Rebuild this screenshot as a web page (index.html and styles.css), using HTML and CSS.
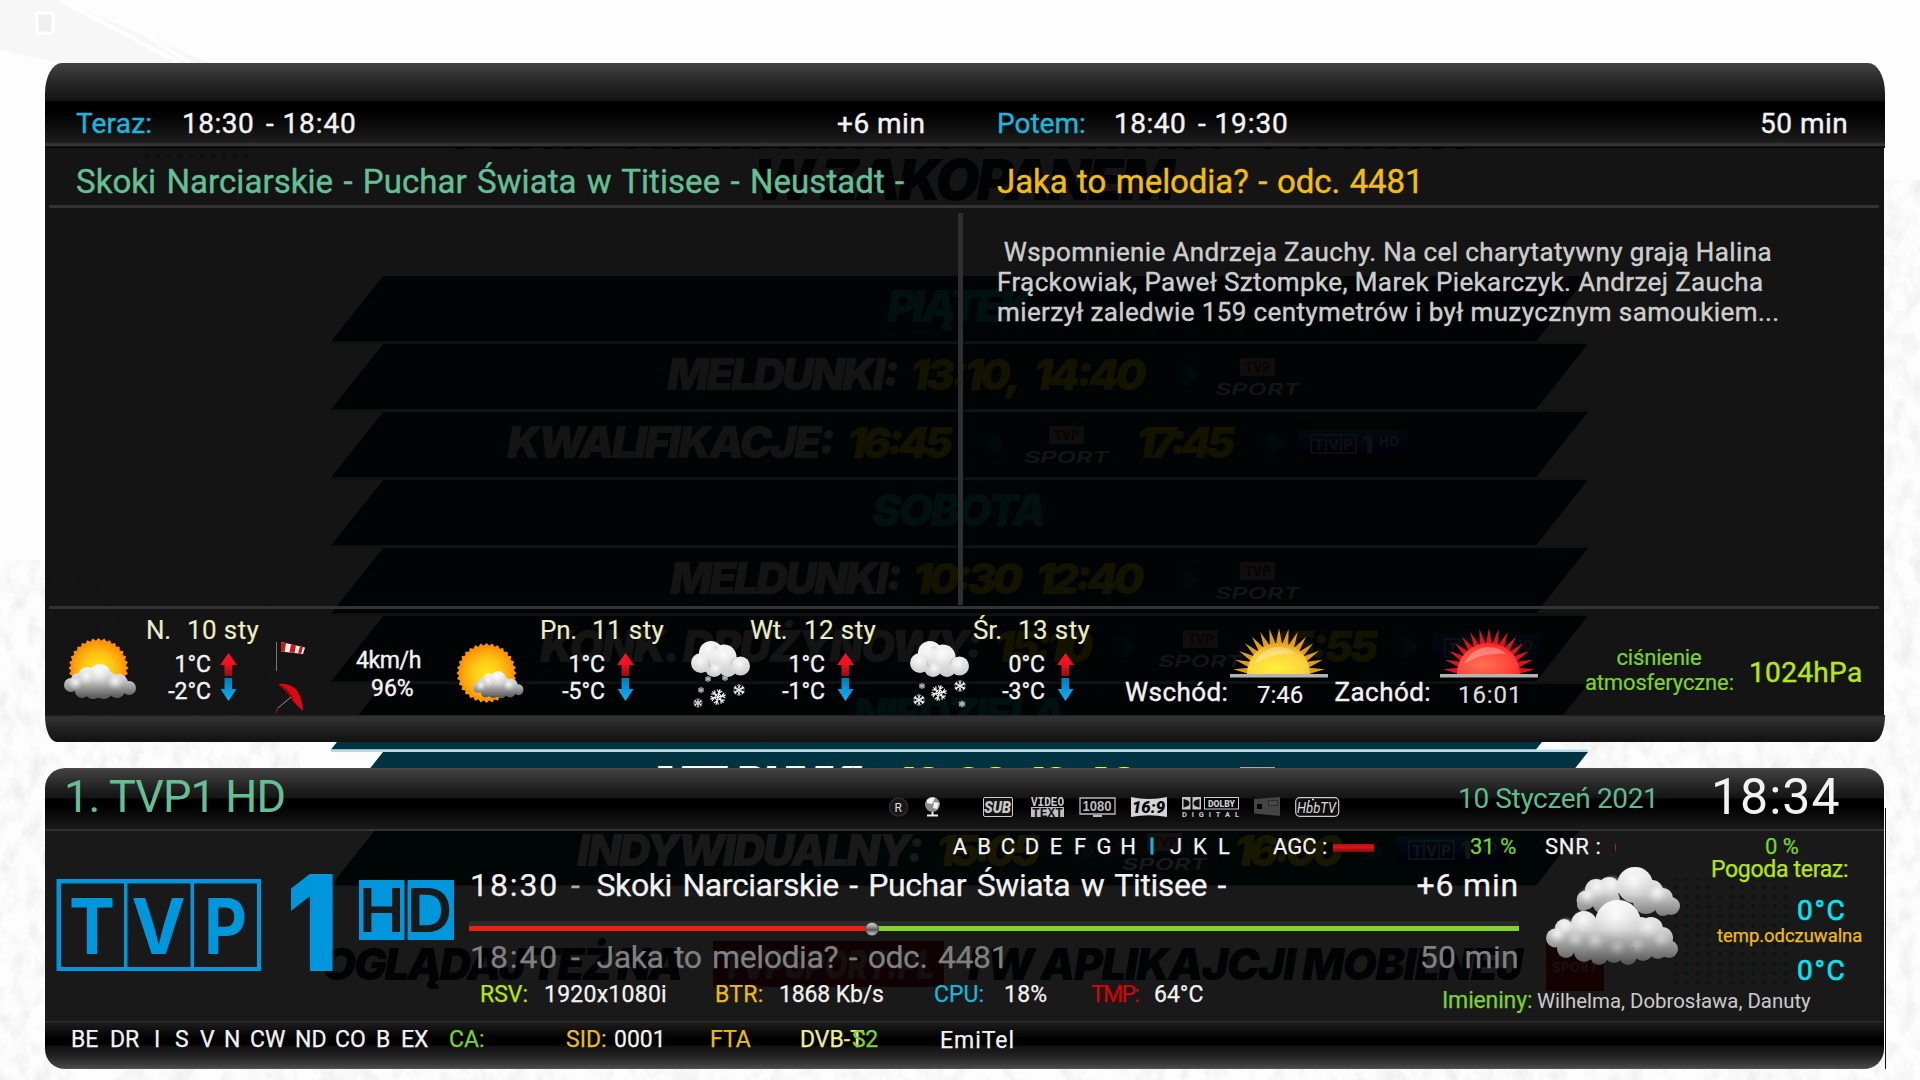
FILE: index.html
```html
<!DOCTYPE html>
<html lang="pl">
<head>
<meta charset="utf-8">
<title>TVP1 HD – infobar</title>
<link rel="stylesheet" href="styles.css">
</head>
<body>

<!-- live broadcast behind the overlay -->
<svg class="broadcast" width="1920" height="1080" viewBox="0 0 1920 1080" aria-hidden="true">
  <defs>
    <filter id="grain" x="0" y="0" width="100%" height="100%">
      <feTurbulence type="fractalNoise" baseFrequency="0.07 0.045" numOctaves="5" seed="7" result="n"/>
      <feColorMatrix in="n" values="0 0 0 0 .86  0 0 0 0 .86  0 0 0 0 .87  2.4 0 0 0 -1.02"/>
      <feComposite in2="SourceGraphic" operator="in"/>
    </filter>
    <linearGradient id="chan" x1="0" y1="0" x2="0" y2="1"><stop offset="0" stop-color="#1380b4"/><stop offset=".5" stop-color="#0a3cb4"/><stop offset="1" stop-color="#020850"/></linearGradient>
    <linearGradient id="arr"><stop offset="0" stop-color="#00b4a0" stop-opacity="0"/><stop offset="1" stop-color="#00b4a0" stop-opacity=".8"/></linearGradient>
    <pattern id="dots" width="11" height="9.5" patternUnits="userSpaceOnUse"><circle cx="4" cy="4" r="2.4" fill="#00a090" opacity=".45"/></pattern>
    <g id="band"><path d="M383 0H1588L1536 65.5H331Z" fill="#003341"/><path d="M331 65.5H1588V68H331Z" fill="#b4dce6"/></g>
    <g id="sport">
      <rect x="25" width="35" height="18" fill="#b9a0a0"/>
      <text x="30" y="14" textLength="25" lengthAdjust="spacingAndGlyphs" font-size="13" font-weight="700" font-family="Inter" fill="#a01e1e">TVP</text>
      <text x="0" y="36.500" textLength="85" lengthAdjust="spacingAndGlyphs" font-size="16" font-style="italic" font-weight="600" font-family="Inter" fill="#fff">SPORT</text>
    </g>
    <g id="chanlogo">
      <rect width="108" height="28" fill="url(#chan)"/>
      <path d="M12 5H57V23H12ZM27 5V23M42 5V23" fill="none" stroke="#ccd" stroke-width="1.500"/>
      <text x="15" y="20" textLength="39" lengthAdjust="spacing" font-size="15" font-weight="700" font-family="Inter" fill="#ccd">TVP</text>
      <text x="63" y="23" font-size="25" font-weight="900" font-family="Inter" fill="#ccd">1</text>
      <text x="80" y="16" textLength="20" font-size="13" font-weight="700" font-family="Inter" fill="#ccd">HD</text>
    </g>
    <path id="arrow" d="M0 0H14L23 10L14 20H0Z" fill="url(#arr)"/>
  </defs>
  <rect width="1920" height="1080" fill="#fdfdfd"/>
  <path d="M0 560H300V790H0ZM0 1040H1920V1080H0ZM1560 742H1920V790H1560ZM1880 180H1920V1080H1880ZM0 760H46V1080H0Z" filter="url(#grain)"/>
  <path d="M0 0H60L210 63H60L0 50Z" fill="#f8f7f8"/>
  <path d="M60 0L180 63M130 25L190 63" stroke="#fff" stroke-width="4"/>
  <rect x="37" y="13" width="16" height="20" rx="2" fill="#efeff0" stroke="#fff" stroke-width="3"/>
  <rect x="140" y="143" width="112" height="20" fill="url(#dots)"/>
  <rect x="1672" y="878" width="120" height="112" fill="url(#dots)"/>
  <g class="caption dark">
    <text x="455" y="149" textLength="1013">PLAN TRANSMISJI PUCHARU ŚWIATA</text>
    <text x="753" y="200" textLength="422" class="caption-lg">W ZAKOPANEM</text>
    <text x="322" y="980" textLength="361">OGLĄDAJ TEŻ NA</text>
    <text x="968" y="980" textLength="555">I W APLIKAJCJI MOBILNEJ</text>
  </g>
  <rect x="713" y="941" width="231" height="46" fill="#a00a14"/>
  <text class="caption pale" x="722" y="979" textLength="212" lengthAdjust="spacingAndGlyphs">TVPSPORT.PL</text>
  <rect x="1546" y="938" width="58" height="53" fill="#c80a14"/>
  <text x="1552" y="972" textLength="46" font-size="13" font-weight="700" font-family="Inter" fill="#eaa">SPORT</text>
  <g>
    <use href="#band" y="276"/><use href="#band" y="344"/><use href="#band" y="412"/><use href="#band" y="480"/><use href="#band" y="548"/>
    <use href="#band" y="616"/><use href="#band" y="684"/><use href="#band" y="752"/>
    <path d="M383 820H1588L1536 885.500H331Z" fill="#003341"/>
  </g>
  <g class="caption teal">
    <text x="887" y="322" textLength="146">PIĄTEK</text>
    <text x="872" y="526" textLength="175">SOBOTA</text>
    <text x="853" y="730" textLength="213">NIEDZIELA</text>
  </g>
  <g class="caption white">
    <text x="667" y="390" textLength="232">MELDUNKI:</text>
    <text x="507" y="458" textLength="328">KWALIFIKACJE:</text>
    <text x="670" y="594" textLength="232">MELDUNKI:</text>
    <text x="540" y="662" textLength="442">KONK. DRUŻYNOWY:</text>
    <text x="653" y="798" textLength="220">MELDUNKI:</text>
    <text x="577" y="866" textLength="346">INDYWIDUALNY:</text>
  </g>
  <g class="caption yellow">
    <text x="910" y="390" textLength="236">13:10, 14:40</text>
    <text x="847" y="458" textLength="106">16:45</text>
    <text x="1136" y="458" textLength="99">17:45</text>
    <text x="913" y="594" textLength="231">10:30 12:40</text>
    <text x="995" y="662" textLength="98">15:10</text>
    <text x="1270" y="662" textLength="108">15:55</text>
    <text x="893" y="798" textLength="243">10:30 12:40</text>
    <text x="936" y="866" textLength="104">15:05</text>
    <text x="1234" y="866" textLength="109">16:00</text>
  </g>
  <use href="#arrow" x="1175" y="365"/><use href="#sport" x="1215" y="358"/>
  <use href="#arrow" x="980" y="433"/><use href="#sport" x="1024" y="426"/><use href="#arrow" x="1260" y="433"/><use href="#chanlogo" x="1299" y="430"/>
  <use href="#arrow" x="1175" y="569"/><use href="#sport" x="1215" y="562"/>
  <use href="#arrow" x="1112" y="637"/><use href="#sport" x="1158" y="630"/><use href="#arrow" x="1395" y="637"/><use href="#chanlogo" x="1433" y="634"/>
  <use href="#sport" x="1215" y="767"/>
  <use href="#arrow" x="1072" y="841"/><use href="#sport" x="1122" y="833"/><use href="#arrow" x="1360" y="841"/><use href="#chanlogo" x="1397" y="836"/>
  <path d="M1885.500 808V1069" stroke="#111"/>
</svg>

<!-- shared weather artwork -->
<svg class="defs" width="0" height="0" aria-hidden="true">
  <defs>
    <radialGradient id="sunG" cx=".5" cy=".52" r=".5"><stop offset="0" stop-color="#ffe81a"/><stop offset=".6" stop-color="#ffc413"/><stop offset="1" stop-color="#ff9c08"/></radialGradient>
    <linearGradient id="cloudG" x1="0" y1="0" x2="0" y2="34" gradientUnits="userSpaceOnUse"><stop offset=".1" stop-color="#f6f6f6"/><stop offset=".5" stop-color="#c4c4c4"/><stop offset=".95" stop-color="#606060"/></linearGradient>
    <linearGradient id="snowG" x1="0" y1="0" x2="0" y2="37" gradientUnits="userSpaceOnUse"><stop offset=".3" stop-color="#f0f0f0"/><stop offset="1" stop-color="#cacaca"/></linearGradient>
    <radialGradient id="puff" cx=".45" cy=".38" r=".58"><stop offset="0" stop-color="#fff" stop-opacity=".85"/><stop offset=".55" stop-color="#f4f4f4" stop-opacity=".35"/><stop offset="1" stop-color="#ddd" stop-opacity="0"/></radialGradient>
    <linearGradient id="upG" x1="0" y1="0" x2="0" y2="1"><stop offset="0" stop-color="#ff1428"/><stop offset=".5" stop-color="#f01020"/><stop offset="1" stop-color="#960c10"/></linearGradient>
    <linearGradient id="downG" x1="0" y1="0" x2="0" y2="1"><stop offset="0" stop-color="#0878b4"/><stop offset=".6" stop-color="#0a9ce0"/><stop offset="1" stop-color="#10b4f4"/></linearGradient>
    <g id="sun">
      <g fill="#ff9408">
        <path id="sq" d="M0-30L30 0L0 30L-30 0Z"/>
        <use href="#sq" transform="rotate(11.250)"/><use href="#sq" transform="rotate(22.500)"/><use href="#sq" transform="rotate(33.750)"/>
        <use href="#sq" transform="rotate(45)"/><use href="#sq" transform="rotate(56.250)"/><use href="#sq" transform="rotate(67.500)"/><use href="#sq" transform="rotate(78.750)"/>
      </g>
      <circle r="25.500" fill="url(#sunG)"/>
    </g>
    <g id="cloud">
      <g fill="url(#cloudG)"><circle cx="7" cy="21" r="7"/><circle cx="14" cy="16" r="7"/><circle cx="23" cy="12" r="9"/><circle cx="36" cy="11" r="11"/><circle cx="45" cy="16" r="8"/><circle cx="55" cy="19" r="9"/><circle cx="65" cy="24" r="7"/><circle cx="18" cy="27" r="7"/><circle cx="29" cy="27" r="8"/><circle cx="40" cy="26" r="9"/><circle cx="53" cy="26" r="8"/></g>
      <g fill="url(#puff)"><circle cx="36" cy="11" r="11"/><circle cx="23" cy="14" r="8"/><circle cx="12" cy="20" r="7"/><circle cx="52" cy="19" r="8"/></g>
    </g>
    <g id="snowcloud">
      <g fill="url(#snowG)"><circle cx="20" cy="12" r="12"/><circle cx="33" cy="16" r="12.500"/><circle cx="10" cy="22" r="10"/><circle cx="49.500" cy="25" r="9.500"/><circle cx="23" cy="27" r="9"/><circle cx="37" cy="27" r="9"/></g>
      <g fill="none" stroke="#8a8a8a" stroke-width="1.500" opacity=".3"><path d="M18 10Q20 6 26 6M20 12Q22 8 27 7M20 26Q16 24 18 20M40 24Q40 20 44 17"/></g>
      <g fill="url(#puff)"><circle cx="20" cy="11" r="10"/><circle cx="33" cy="16" r="12"/><circle cx="10" cy="22" r="9"/><circle cx="49" cy="25" r="9"/><circle cx="25" cy="29" r="7"/></g>
    </g>
    <g id="flake" fill="none" stroke="#f4f4f4" stroke-width="1.200"><path id="fl" d="M0-8V8M-2.500-7L0-4L2.500-7M-2.500 7L0 4L2.500 7"/><use href="#fl" transform="rotate(60)"/><use href="#fl" transform="rotate(120)"/><circle r="3"/></g>
    <g id="temps"><path d="M8.500 0L17 12H12V23H4.500V12H0Z" fill="url(#upG)"/><path d="M4.500 25H12V36H16.500L8.500 48L.5 36H4.500Z" fill="url(#downG)"/></g>
    <path id="ray" d="M-3.500-28L0-46L3.500-28Z"/>
    <g id="rays"><use href="#ray"/><use href="#ray" transform="rotate(12)"/><use href="#ray" transform="rotate(24)"/><use href="#ray" transform="rotate(36)"/><use href="#ray" transform="rotate(48)"/><use href="#ray" transform="rotate(60)"/><use href="#ray" transform="rotate(72)"/><use href="#ray" transform="rotate(84)"/><use href="#ray" transform="rotate(-12)"/><use href="#ray" transform="rotate(-24)"/><use href="#ray" transform="rotate(-36)"/><use href="#ray" transform="rotate(-48)"/><use href="#ray" transform="rotate(-60)"/><use href="#ray" transform="rotate(-72)"/><use href="#ray" transform="rotate(-84)"/></g>
    <radialGradient id="riseG" cx=".45" cy=".8" r=".8"><stop offset="0" stop-color="#fff03c"/><stop offset=".6" stop-color="#fbd23c"/><stop offset="1" stop-color="#e8a020"/></radialGradient>
    <radialGradient id="setG" cx=".4" cy=".7" r=".8"><stop offset="0" stop-color="#ff7058"/><stop offset=".6" stop-color="#ff4438"/><stop offset="1" stop-color="#f01824"/></radialGradient>
  </defs>
</svg>

<main class="osd">
  <section class="panel epg">
    <header class="epg-times">
      <span class="blue t0">Teraz:</span><span class="t1">18:30</span><span class="t2">- 18:40</span><span class="t3">+6 min</span>
      <span class="blue">Potem:</span><span class="t1">18:40</span><span class="t2">- 19:30</span><span class="t3">50 min</span>
    </header>
    <div class="epg-titles">
      <span class="mint">Skoki Narciarskie - Puchar Świata w Titisee - Neustadt -</span>
      <span class="amber">Jaka to melodia? - odc. 4481</span>
    </div>
    <div class="rule"></div>
    <div class="epg-body">
      <div></div>
      <div class="divider"></div>
      <p class="desc">&nbsp;Wspomnienie Andrzeja Zauchy. Na cel charytatywny grają Halina<br>Frąckowiak, Paweł Sztompke, Marek Piekarczyk. Andrzej Zaucha<br>mierzył zaledwie 159 centymetrów i był muzycznym samoukiem...</p>
    </div>
    <div class="rule"></div>
    <div class="forecast">
      <svg class="wx" width="81" height="106" viewBox="64 609 81 106">
        <use href="#sun" transform="translate(98.500 668)"/>
        <use href="#cloud" transform="translate(64 664)"/>
      </svg>
      <div class="day day-1">
        <div class="date"><span>N.</span><span>10 sty</span></div>
        <div class="temps"><div>1°C<br>-2°C</div><svg width="17" height="48"><use href="#temps"/></svg></div>
      </div>
      <svg width="80" height="106" viewBox="276 609 80 106">
        <path d="M276.500 642V671" stroke="#777"/>
        <path d="M281 642L305 647.500L303 654L281 651.500Z" fill="#f2f2f2"/>
        <path d="M281 642L286 643L284.500 652L281 651.500ZM291 644.300L296 645.500L294.500 653L289.500 652.500ZM300 646.300L303 647L301 653.800L298 653.500Z" fill="#d4161c"/>
        <path d="M278 684Q301 681 303 711Q294 703 291 698Q286 690 278 684Z" fill="#e00810"/>
        <path d="M278 684Q284 687 291 698L294 701Q290 688 278 684Z" fill="#980408"/>
        <path d="M291 697L278 708" stroke="#999"/><path d="M278 708Q275 711 277 713" stroke="#a01010" fill="none" stroke-width="1.500"/>
      </svg>
      <div class="air"><div>4km/h</div><div class="hum">96%</div></div>
      <svg class="wx" width="83" height="106" viewBox="456 609 83 106">
        <use href="#sun" transform="translate(486.500 673)"/>
        <use href="#cloud" transform="translate(473 671) scale(.7 .78)"/>
      </svg>
      <div class="day day-2">
        <div class="date"><span>Pn.</span><span>11 sty</span></div>
        <div class="temps"><div>1°C<br>-5°C</div><svg width="17" height="48"><use href="#temps"/></svg></div>
      </div>
      <svg width="59" height="106" viewBox="691 609 59 106">
        <use href="#flake" transform="translate(708 679) scale(.4)"/><use href="#flake" transform="translate(725 678) scale(.4)"/>
        <use href="#snowcloud" transform="translate(691 641)"/>
        <use href="#flake" transform="translate(718 697) rotate(15)"/><use href="#flake" transform="translate(739 690) scale(.75)"/><use href="#flake" transform="translate(701 690) scale(.4)"/><use href="#flake" transform="translate(698 703) scale(.6)"/>
      </svg>
      <div class="day day-3">
        <div class="date"><span>Wt.</span><span>12 sty</span></div>
        <div class="temps"><div>1°C<br>-1°C</div><svg width="17" height="48"><use href="#temps"/></svg></div>
      </div>
      <svg width="63" height="106" viewBox="910 609 63 106">
        <use href="#snowcloud" transform="translate(910 641)"/>
        <use href="#flake" transform="translate(939 693) rotate(15)"/><use href="#flake" transform="translate(960 686) scale(.75)"/><use href="#flake" transform="translate(922 686) scale(.4)"/><use href="#flake" transform="translate(919 700) scale(.75)"/><use href="#flake" transform="translate(962 704) scale(.45)"/>
      </svg>
      <div class="day day-4">
        <div class="date"><span>Śr.</span><span>13 sty</span></div>
        <div class="temps"><div>0°C<br>-3°C</div><svg width="17" height="48"><use href="#temps"/></svg></div>
      </div>
      <div class="sun-label">Wschód:</div>
      <div class="sun-time">
        <svg width="98" height="50" viewBox="0 0 98 50"><g transform="translate(49 46)" fill="#e09c1e"><use href="#rays"/></g><path d="M17 46A31.500 31 0 0 1 80 46Z" fill="url(#riseG)"/><path d="M24 36Q32 20 48 19Q62 20 66 26Q42 24 24 36Z" fill="#fff" opacity=".3"/><path d="M0 46H98V49.500H0Z" fill="#b4b4b4"/></svg>
        <span>7:46</span>
      </div>
      <div class="sun-label sun-set">Zachód:</div>
      <div class="sun-time late">
        <svg width="98" height="50" viewBox="0 0 98 50"><g transform="translate(49 46)" fill="#d81420"><use href="#rays"/></g><path d="M17 46A31.500 31 0 0 1 80 46Z" fill="url(#setG)"/><path d="M24 36Q32 20 48 19Q62 20 66 26Q42 24 24 36Z" fill="#fff" opacity=".3"/><path d="M0 46H98V49.500H0Z" fill="#b4b4b4"/></svg>
        <span>16:01</span>
      </div>
      <div class="press-label">ciśnienie<br>atmosferyczne:</div>
      <div class="press">1024hPa</div>
    </div>
    <div class="epg-foot"></div>
  </section>

  <section class="panel info">
    <header class="info-head">
      <span class="chan-name">1. TVP1 HD</span>
      <svg class="flags" width="460" height="20" viewBox="885 797 460 20">
        <circle cx="898.500" cy="807" r="9" fill="#161616" stroke="#2c2c2c" stroke-width="1.500"/>
        <text x="894.500" y="811.500" font-size="12" fill="#ddd">R</text>
        <circle cx="932.500" cy="804.500" r="7.500" fill="#8c8c8c"/><path d="M927 800Q931 796 935 798L932 804L927 803ZM934 802L939 803L937 809L933 808Z" fill="#f4f4f4"/><path d="M932.500 812V815M927 815.500H938" stroke="#eee" stroke-width="2"/>
        <rect x="983.500" y="797.500" width="29" height="19" rx="1.500" fill="#111" stroke="#ccc"/>
        <text x="984" y="813" textLength="27" lengthAdjust="spacingAndGlyphs" font-size="17" font-weight="900" font-style="italic" fill="#c8c8c8">SUB</text>
        <text x="1031" y="805.500" textLength="33" lengthAdjust="spacingAndGlyphs" font-size="12" font-weight="700" font-family="Liberation Mono" fill="#ccc">VIDEO</text>
        <rect x="1031" y="807" width="33" height="10" fill="#c0c0c0"/>
        <text x="1032" y="816.500" textLength="31" lengthAdjust="spacingAndGlyphs" font-size="13" font-weight="700" font-family="Liberation Mono" fill="#111">TEXT</text>
        <path d="M1080 798H1115V814H1080Z" fill="none" stroke="#bbb" stroke-width="1.300"/><rect x="1093" y="815" width="9" height="2" fill="#bbb"/>
        <text x="1082.500" y="811" textLength="29" lengthAdjust="spacingAndGlyphs" font-size="14" font-family="Liberation Sans" font-weight="700" fill="#bbb">1080</text>
        <path d="M1131 797Q1149 801 1167 797V817Q1149 813.500 1131 817Z" fill="#d4d4d4"/>
        <text x="1132" y="812.500" textLength="33" lengthAdjust="spacingAndGlyphs" font-size="16" font-weight="900" font-style="italic" fill="#000">16:9</text>
        <path d="M1182 797H1190.500V809.500H1182ZM1192.500 797H1201V809.500H1192.500Z" fill="#c4c4c4"/><path d="M1183.500 799Q1189.500 800 1189.500 803.300T1183.500 807.500ZM1199.500 799Q1193.500 800 1193.500 803.300T1199.500 807.500Z" fill="#111"/>
        <rect x="1204.500" y="797.500" width="34" height="11.500" fill="none" stroke="#ccc"/>
        <text x="1208" y="807" textLength="27" lengthAdjust="spacingAndGlyphs" font-size="9.500" font-weight="900" fill="#ccc">DOLBY</text>
        <text x="1182" y="817" textLength="57" font-size="7.500" font-weight="700" fill="#ccc">DIGITAL</text>
        <path d="M1254 799L1280 797V816L1254 813.500Z" fill="#444"/><rect x="1257" y="804" width="5" height="5" fill="#000"/><rect x="1268.500" y="800.500" width="9" height="5" fill="#4a4a4a" stroke="#2a2a2a"/>
        <rect x="1295.700" y="797.700" width="43" height="18.600" rx="4" fill="#0c0c0c" stroke="#ccc" stroke-width="1.200"/>
        <text x="1297" y="813" textLength="39" lengthAdjust="spacingAndGlyphs" font-size="14" font-style="italic" fill="#ddd">HbbTV</text>
        <path d="M1308 801H1310M1312 799.500H1314" stroke="#ddd" stroke-width="1.500"/>
      </svg>
      <span class="today">10 Styczeń 2021</span>
      <span class="clock">18:34</span>
    </header>

    <div class="signal">
      <div class="drives"><i>A</i><i>B</i><i>C</i><i>D</i><i>E</i><i>F</i><i>G</i><i>H</i><i class="on">I</i><i>J</i><i>K</i><i>L</i></div>
      <span>AGC :</span>
      <div class="meter"><b style="width:41px"></b></div>
      <span class="green">31 %</span>
      <span class="snr">SNR :</span>
      <div class="meter"><b style="width:1px"></b></div>
      <span class="green">0 %</span>
    </div>

    <div class="now">
      <svg class="logo" width="424" height="123" viewBox="45 862 424 123" fill="#0096dc" font-family="Inter">
        <path d="M56.500 879H261V971H56.500ZM61 883.500V967H124V883.500ZM127.500 883.500V967H190.500V883.500ZM194 883.500V967H257V883.500Z" fill-rule="evenodd"/>
        <text class="tvp" transform="translate(69 953.500) scale(1 1.080)" textLength="46" lengthAdjust="spacingAndGlyphs">T</text>
        <text class="tvp" transform="translate(131.500 953.500) scale(1 1.080)" textLength="54" lengthAdjust="spacingAndGlyphs">V</text>
        <text class="tvp" transform="translate(204 953.500) scale(1 1.080)" textLength="43" lengthAdjust="spacingAndGlyphs">P</text>
        <text x="286" y="971" font-size="133" font-weight="900" textLength="52" lengthAdjust="spacingAndGlyphs">1</text>
        <path d="M359 880H404.500V940H359ZM407.500 880H454V940H407.500Z"/>
        <g fill="#191919" font-size="60" font-weight="600">
          <text x="359" y="932" textLength="45.500" lengthAdjust="spacingAndGlyphs">H</text>
          <text x="406.500" y="932" textLength="46" lengthAdjust="spacingAndGlyphs">D</text>
        </g>
      </svg>
      <div class="events">
        <div class="event"><span class="ev-t">18:30</span><span class="dash">-</span><span class="ev-n">Skoki Narciarskie - Puchar Świata w Titisee -</span><span class="ev-d">+6 min</span></div>
        <div class="progress"><div class="track"><b style="width:397px"></b><i class="knob"></i></div></div>
        <div class="event next"><span class="ev-t">18:40</span><span class="dash">-</span><span class="ev-n">Jaka to melodia? - odc. 4481</span><span class="ev-e">50 min</span></div>
      </div>
      <svg class="big-wx" width="134" height="98" viewBox="0 0 134 98">
        <defs>
          <linearGradient id="backG" x1="0" y1="0" x2="0" y2="52" gradientUnits="userSpaceOnUse"><stop offset="0" stop-color="#f6f6f6"/><stop offset=".5" stop-color="#d0d0d0"/><stop offset="1" stop-color="#707070"/></linearGradient>
          <linearGradient id="frontG" x1="0" y1="33" x2="0" y2="98" gradientUnits="userSpaceOnUse"><stop offset="0" stop-color="#fff"/><stop offset=".45" stop-color="#d4d4d4"/><stop offset="1" stop-color="#505050"/></linearGradient>
          <filter id="soft"><feGaussianBlur stdDeviation="1.200"/></filter>
        </defs>
        <g fill="url(#backG)"><circle cx="40" cy="33" r="9.500"/><circle cx="37" cy="38" r="6"/><circle cx="50" cy="23" r="11"/><circle cx="63" cy="21" r="11"/><circle cx="89" cy="18" r="18"/><circle cx="106" cy="24" r="11"/><circle cx="117" cy="31" r="10"/><circle cx="125" cy="39" r="9"/><circle cx="60" cy="34" r="14"/><circle cx="100" cy="34" r="13"/><circle cx="117" cy="41" r="8"/></g>
        <g fill="url(#puff)" filter="url(#soft)"><circle cx="42" cy="30" r="9"/><circle cx="52" cy="22" r="10"/><circle cx="66" cy="20" r="11"/><circle cx="89" cy="17" r="17"/><circle cx="112" cy="28" r="10"/></g>
        <g fill="url(#frontG)"><circle cx="9.500" cy="71" r="9.500"/><circle cx="18" cy="61" r="9"/><circle cx="20" cy="82" r="9"/><circle cx="38" cy="85" r="10"/><circle cx="53" cy="89" r="9"/><circle cx="68" cy="86" r="10"/><circle cx="82" cy="89" r="9"/><circle cx="97" cy="84" r="10"/><circle cx="112" cy="82" r="10"/><circle cx="123" cy="82" r="9"/><circle cx="38" cy="57" r="13"/><circle cx="105" cy="62" r="12"/><circle cx="116" cy="71" r="11"/><circle cx="30" cy="70" r="14"/><circle cx="50" cy="70" r="16"/><circle cx="94" cy="66" r="16"/><circle cx="72" cy="56" r="23"/><circle cx="72" cy="76" r="16"/></g>
        <g fill="url(#puff)" filter="url(#soft)"><circle cx="12" cy="69" r="9"/><circle cx="20" cy="60" r="9"/><circle cx="38" cy="56" r="12"/><circle cx="72" cy="53" r="21"/><circle cx="30" cy="74" r="8" opacity=".5"/><circle cx="50" cy="76" r="9" opacity=".5"/><circle cx="103" cy="62" r="11" opacity=".7"/><circle cx="116" cy="74" r="9" opacity=".5"/><circle cx="92" cy="80" r="8" opacity=".4"/><circle cx="72" cy="82" r="8" opacity=".4"/></g>
      </svg>
      <div class="wx-now">
        <div class="wx-title">Pogoda teraz:</div>
        <div class="deg">0°C</div>
        <div class="feels">temp.odczuwalna</div>
        <div class="deg deg-2">0°C</div>
      </div>
    </div>

    <div class="stats">
      <span class="lime">RSV:</span><span class="w1">1920x1080i</span>
      <span class="gold w1">BTR:</span><span class="w3">1868 Kb/s</span>
      <span class="blue">CPU:</span><span class="w1">18%</span>
      <span class="red">TMP:</span><span>64°C</span>
      <span class="green names">Imieniny:</span><span class="names who">Wilhelma, Dobrosława, Danuty</span>
    </div>

    <footer class="caids">
      <span>BE</span><span>DR</span><span>I</span><span>S</span><span>V</span><span>N</span><span>CW</span><span>ND</span><span>CO</span><span>B</span><span>EX</span>
      <span class="green">CA:</span><span class="gold">SID:</span><span>0001</span><span class="gold">FTA</span>
      <span class="tuner">DVB-T<em>S2</em></span><span class="provider">EmiTel</span>
    </footer>
  </section>
</main>
</body>
</html>
```
FILE: styles.css
```css
* { box-sizing: border-box; }
body { margin: 0; width: 1920px; height: 1080px; overflow: hidden; background: #fdfdfd; font-family: Roboto, "Liberation Sans", sans-serif; font-weight: 400; color: #f2f2f2; position: relative; }
svg { display: block; }
i, em { font-style: normal; }

.broadcast { position: absolute; inset: 0; }
.defs { position: absolute; }
.caption { font-family: Inter, sans-serif; font-weight: 900; font-style: italic; font-size: 44px; }
.caption-lg { font-size: 57px; }
.dark { fill: #00202a; }
.teal { fill: #00d2c0; }
.white { fill: #fff; }
.pale { fill: #c8a0a0; font-size: 40px; }
.yellow { fill: #eef200; font-size: 43px; word-spacing: 12px; }

.osd { position: relative; display: flex; flex-direction: column; gap: 26px; padding: 63px 35px 0 45px; }
.panel { width: 1840px; overflow: hidden; white-space: nowrap; }
.epg { border-radius: 17px 17px 12px 12px / 30px 30px 26px 26px; -webkit-text-stroke: .4px; }

.blue { color: #1bb6dc; }
.mint { color: #66bf94; letter-spacing: .06px; word-spacing: 2px; }
.amber { color: #f0bd10; letter-spacing: -.08px; word-spacing: 1.5px; }
.green { color: #7cd22f; }
.lime { color: #b6e614; }
.gold { color: #eabb1c; }
.red { color: #d00505; letter-spacing: -1.7px; }

/* now / next */
.epg-times { height: 85px; padding: 38px 0 0 31px; display: grid; grid-template-columns: 106px 84px 571px 160px 117px 84px 562px 1fr; font-size: 28px; line-height: 46px;
  background: linear-gradient(#424242 0, #2a2a2a 17px, #141414 37px, #0a0a0a 38px, #000 39px, #000 50px, #1c1c1c 79px, #363636 81px, #303030 83px, #000 84px); }
.t0 { letter-spacing: .2px; }
.t1 { letter-spacing: .5px; }
.t2 { letter-spacing: .9px; }
.t3 { letter-spacing: .5px; }
.epg-titles { height: 57px; padding: 10px 0 0 31px; display: grid; grid-template-columns: 921px 1fr; font-size: 33px; line-height: 47px; background: rgba(0, 0, 0, .922); margin-right: 1px; }
.rule { height: 3px; background: #333; margin-right: 1px; border: solid #141414; border-width: 0 5px 0 4px; }
.epg-body { height: 398px; display: grid; grid-template-columns: 913px 5px 1fr; background: rgba(0, 0, 0, .922); margin-right: 1px; }
.divider { margin: 5px 0 1px; background: #2e2e2e; }
.desc { margin: 0; padding: 29px 0 0 34px; font-size: 26px; line-height: 30px; letter-spacing: .38px; color: #cdcdcd; }

.forecast { height: 106px; padding-left: 19px; margin-right: 1px; background: rgba(0, 0, 0, .922); display: grid;
  grid-template-columns: 81px 131px 80px 100px 83px 152px 59px 160px 63px 152px 105px 98px 112px 98px 47px 148px 1fr; }
.day { padding-top: 6px; }
.date { display: flex; font-size: 26px; line-height: 30px; color: #ecedc2; letter-spacing: .4px; -webkit-text-stroke: .15px; }
.date span:first-child { flex: none; letter-spacing: -.2px; }
.temps { display: flex; padding-top: 7px; font-size: 23px; line-height: 26.5px; text-align: right; }
.temps div { flex: none; }
.temps svg { margin-top: 1px; }
.day-1 .date { padding-left: 1px; }
.day-1 .date span:first-child { width: 41px; }
.day-1 .temps div { width: 66px; margin-right: 9px; }
.day-2 .date { padding-left: 1px; }
.day-2 .date span:first-child { width: 52px; }
.day-2 .temps div { width: 66px; margin-right: 12px; }
.day-3 .date { letter-spacing: .4px; }
.day-3 .date span:first-child { width: 54px; letter-spacing: -.4px; }
.day-3 .temps div { width: 75px; margin-right: 12px; }
.day-4 .date span:first-child { width: 45px; }
.day-4 .temps div { width: 72px; margin-right: 12px; }
.air { padding-top: 38px; font-size: 23px; line-height: 28px; letter-spacing: -.4px; }
.hum { padding-left: 15px; letter-spacing: 0; }
.sun-label { padding-top: 67px; font-size: 26px; line-height: 32px; letter-spacing: .45px; }
.sun-set { padding-left: 6.5px; }
.sun-time { padding-top: 19px; font-size: 24px; line-height: 34px; -webkit-text-stroke: .2px; }
.sun-time span { display: block; padding-left: 27px; }
.late span { padding-left: 18px; letter-spacing: .9px; color: #ddd; }
.press-label { grid-column: 16; padding-top: 36px; text-align: center; font-size: 22px; line-height: 25px; letter-spacing: -.15px; color: #7cd22f; -webkit-text-stroke: .2px; }
.press { padding: 47px 0 0 16px; font-size: 28px; line-height: 33px; letter-spacing: .35px; color: #b6e614; }
.epg-foot { height: 27px; background: linear-gradient(#1c1c1c, #333 2px, #222 50%, #111); }

/* channel bar */
.info { height: 301px; border-radius: 20px; font-size: 23px; width: 1839px; -webkit-text-stroke: .25px; }
.info svg { -webkit-text-stroke: 0; }
.info-head { height: 63px; padding-left: 19px; display: grid; grid-template-columns: 821px 573px 253px 1fr; -webkit-text-stroke: 0;
  background: linear-gradient(#505050 0, #404040 2px, #222 20px, #141414 30px, #000 31px, #000 38px, #1a1a1a 61px, #343434 61px, #303030); }
.chan-name { font-size: 45px; line-height: 57px; letter-spacing: -.85px; color: #66bf94; }
.flags { margin-top: 29px; }
.today { font-size: 28px; line-height: 61px; letter-spacing: -.36px; color: #5fbb8c; }
.clock { font-size: 50px; line-height: 58px; letter-spacing: 1px; }

.signal { height: 31px; padding-left: 903px; display: grid; grid-template-columns: 325px 60px 137px 75px 70px 150px 1fr; font-size: 22px; line-height: 31px; background: rgba(0, 0, 0, .9); }
.drives { display: flex; }
.drives i { width: 24px; text-align: center; }
.drives .on { color: #1bb6dc; -webkit-text-stroke: .8px; }
.snr { letter-spacing: .7px; }
.meter { padding-top: 13px; }
.meter b { display: block; height: 8px; background: linear-gradient(#b01010, #d81818 40%, #800808); }

.now { height: 123px; display: grid; grid-template-columns: 424px 1050px 27px 134px 1fr; background: rgba(0, 0, 0, .9); }
.tvp { font-size: 71px; font-weight: 700; }
.event { padding-left: 1px; display: grid; grid-template-columns: 101px 25.5px 1fr auto; font-size: 32px; line-height: 47.5px; height: 47px; }
.ev-t { letter-spacing: 1.9px; }
.ev-n { letter-spacing: -.42px; word-spacing: 3px; }
.ev-d { letter-spacing: .8px; }
.ev-e { letter-spacing: .3px; }
.dash { color: #a8a8a8; }
.next { line-height: 46px; height: 46px; color: #808080; }
.next .dash { color: #808080; }
.progress { height: 25px; padding-top: 12px; }
.track { position: relative; height: 10px; border-top: 5px solid #2a2a2a; background: #82d32d; }
.track b { display: block; height: 5px; background: #ee2010; }
.knob { position: absolute; left: 396px; top: -4px; width: 14px; height: 14px; border-radius: 50%; background: linear-gradient(#ddd, #777 45%, #555 55%, #ccc); border: 1px solid #5a4a5e; }
.big-wx { grid-column: 4; margin-top: 5px; }
.wx-now { padding-left: 31px; padding-top: 1px; }
.wx-title { line-height: 14px; letter-spacing: -.31px; color: #b6e614; }
.deg { margin-top: 20px; padding-left: 86px; font-size: 28px; line-height: 28px; letter-spacing: 1.7px; color: #00e6f2; -webkit-text-stroke: .6px; }
.feels { padding-left: 6px; font-size: 18.4px; line-height: 21px; color: #f0bd10; }
.deg-2 { margin-top: 11px; }

.stats { height: 36px; padding-left: 435px; display: grid; grid-template-columns: 64px 171px 64px 155px 70px 87px 63px 288px 95px 1fr; line-height: 20px; background: rgba(0, 0, 0, .9); }
.names { line-height: 31px; letter-spacing: -.15px; }
.who { font-size: 20.4px; line-height: 32px; letter-spacing: 0; color: #cbcbcb; -webkit-text-stroke: 0; }
.w1 { letter-spacing: .25px; }
.w3 { letter-spacing: -.15px; }

.caids { height: 48px; padding-left: 26px; display: grid; grid-template-columns: 39px 44px 21px 25px 24px 26px 45px 40px 41px 25px 48px 117px 48px 96px 90px 140px 1fr; line-height: 38px;
  background: linear-gradient(#333 0, #1c1c1c 2px, #000 18px, #000 24px, #111 25px, #202020 34px, #444 46px, #555); }
.tuner { position: relative; color: #eeee96; }
.tuner em { position: absolute; left: 52px; top: 0; color: #7cd22f; letter-spacing: -.5px; }
.provider { line-height: 40px; letter-spacing: .95px; }
```
